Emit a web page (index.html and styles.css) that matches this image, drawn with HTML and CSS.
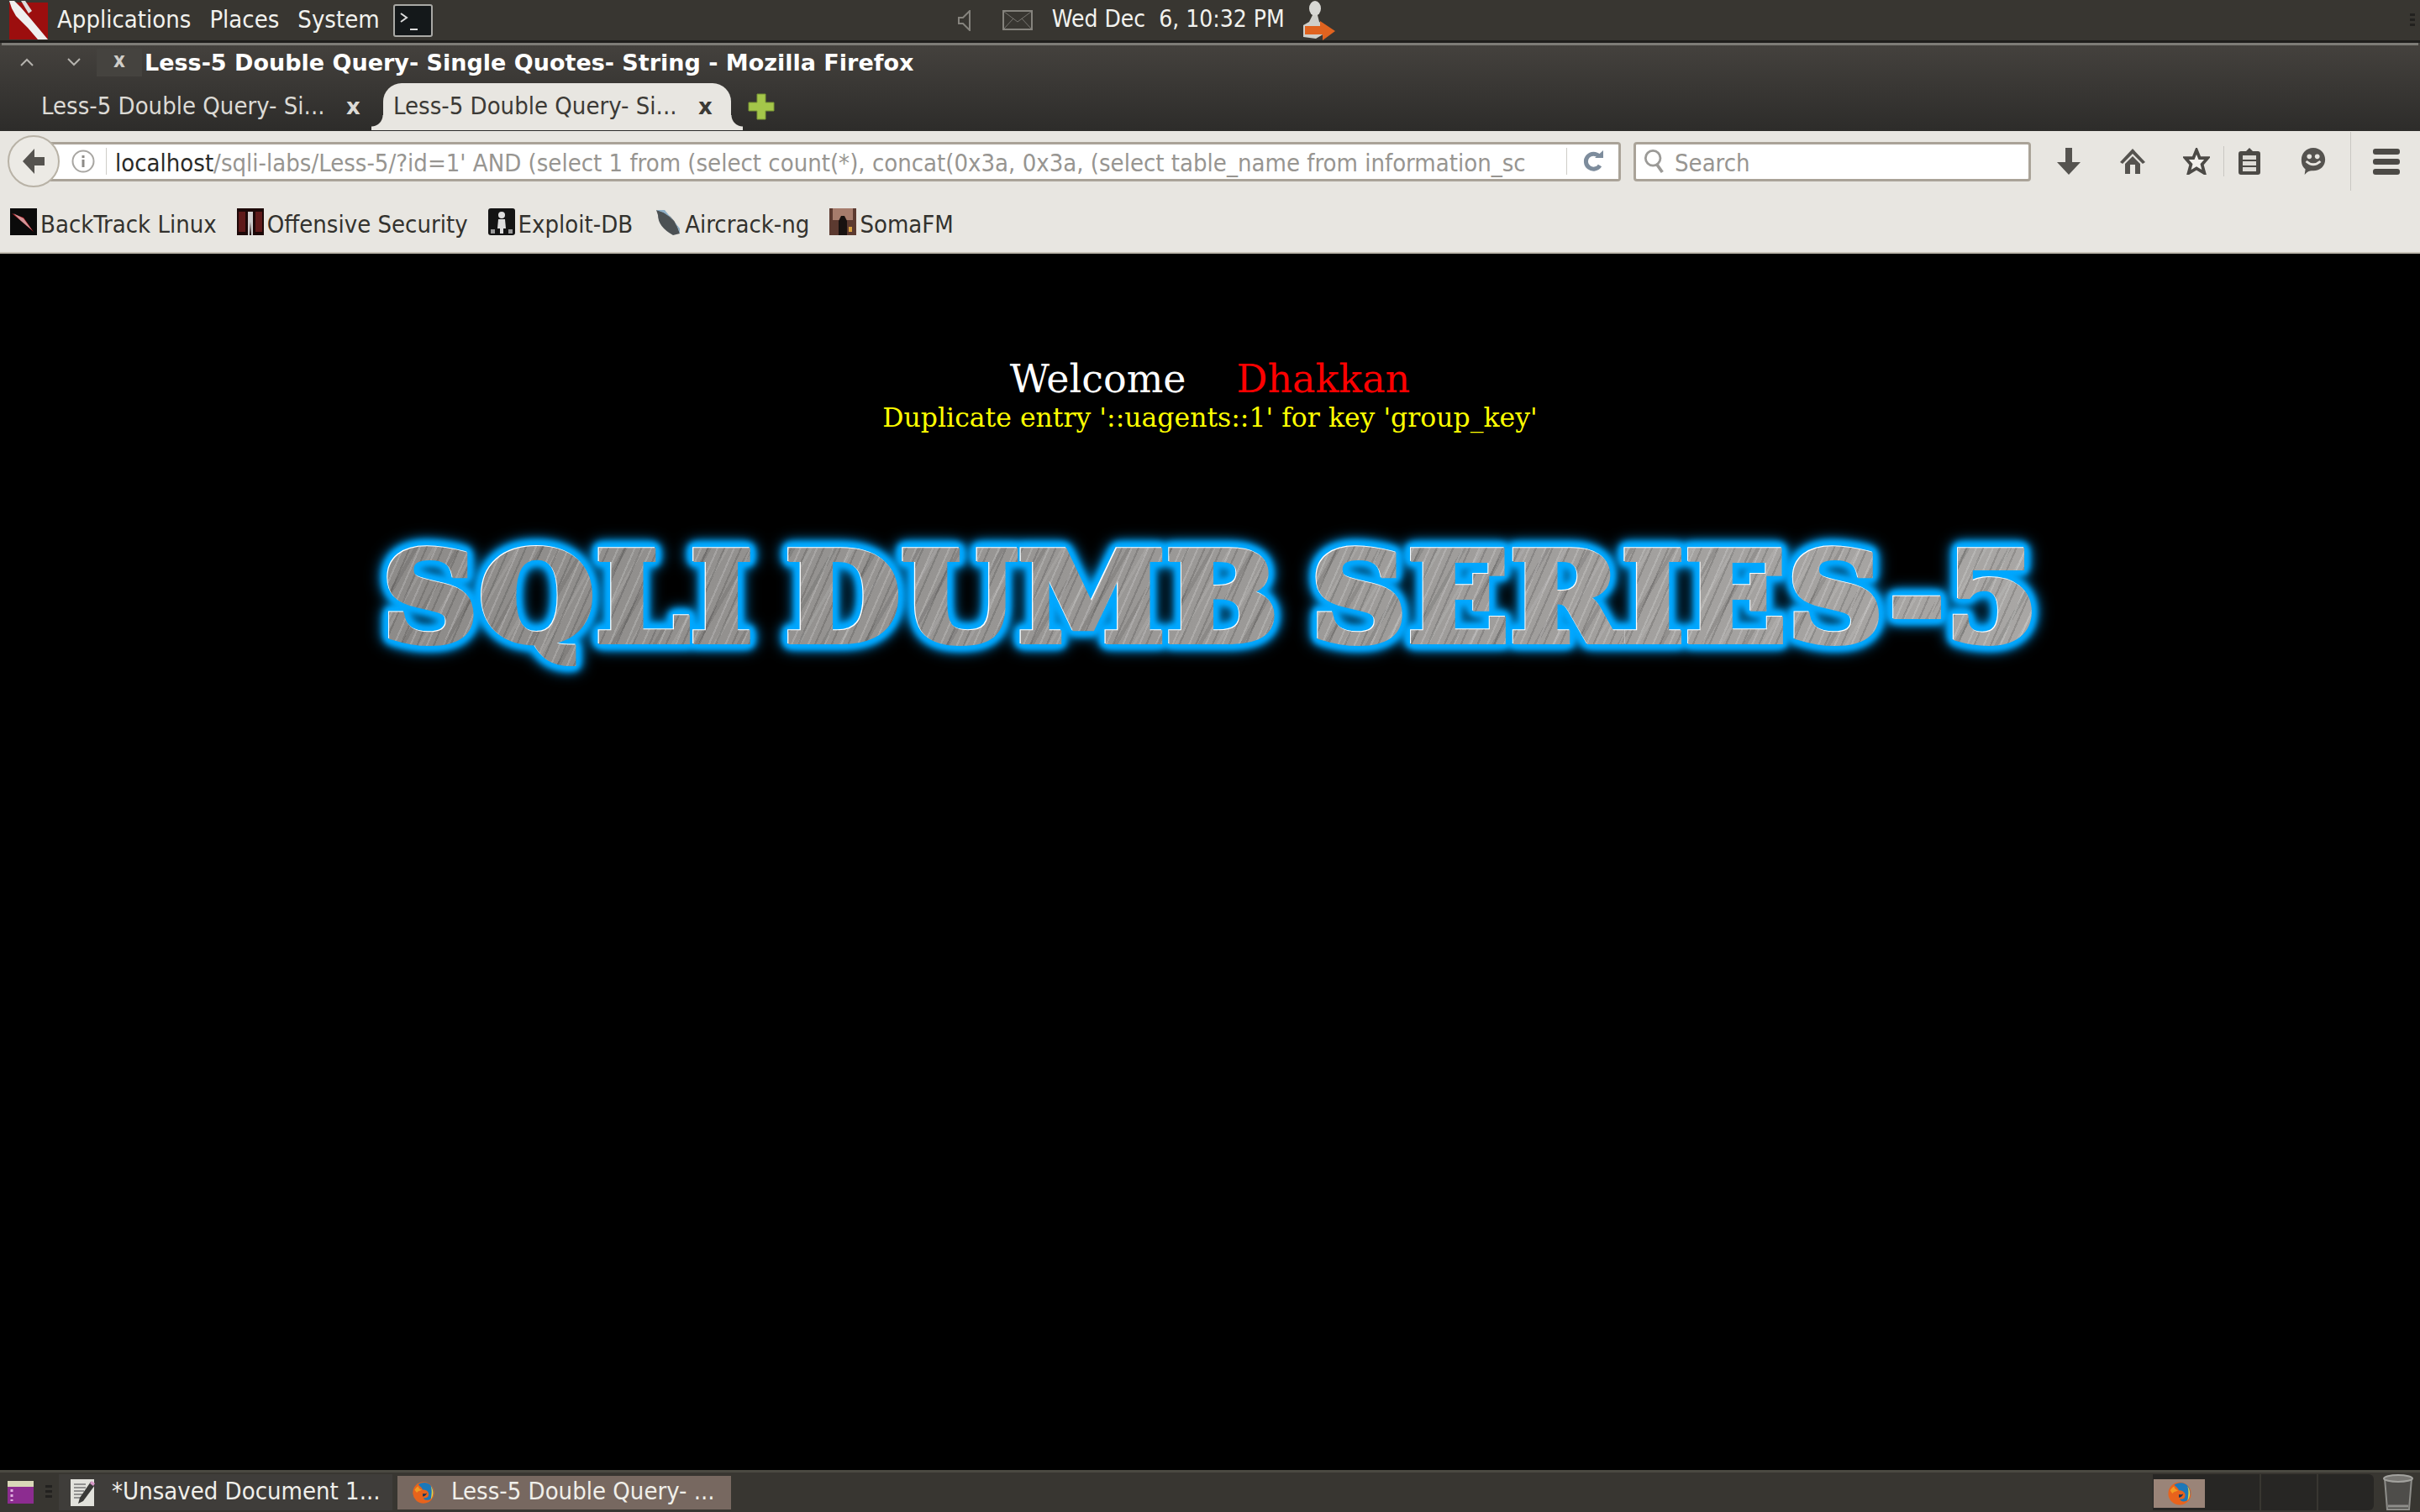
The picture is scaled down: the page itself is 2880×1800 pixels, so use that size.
FILE: index.html
```html
<!DOCTYPE html>
<html lang="en">
<head>
  <meta charset="UTF-8" />
  <title>Less-5 Double Query- Single Quotes- String - Mozilla Firefox</title>
  <link rel="stylesheet" href="styles.css">
</head>
<body>
  <svg class="defs" width="0" height="0">
    <symbol id="firefox" viewBox="0 0 32 32">
      <circle cx="16" cy="16" r="14.5" fill="#e8631c"/>
      <path d="M9 5c5-4 15-4 19 4 3 6 1 13-3 16-4 2-8 1-9-2 4 1 7-1 7-5 0-4-4-6-8-6-1-3-3-4-6-7z" fill="#1c78b8"/>
      <path d="M26 7c4 5 4 13 0 18 1-6 2-12 0-18z" fill="#f2d23c"/>
      <path d="M15 17c3 1 6 0 6-2-1 4-3 6-6 6z" fill="#12345e"/>
      <path d="M4 12c2-3 3-4 5-5 0 3 2 4 5 5-3 2-5 1-7 4-1-1-2-2-3-4z" fill="#f29a22"/>
    </symbol>
  </svg>

  <header class="panel">
    <svg class="logo" viewBox="0 0 46 46">
      <rect y="2" width="46" height="44" fill="#9c0e0e"/>
      <path d="M0 0h6l8 8 12 14 10 12 10 12H34L22 32 8 18 3 9z" fill="#efefef"/>
      <path d="M14 0h5l8 12-4 3z" fill="#ddd"/>
    </svg>
    <nav class="panel-menu">
      <span>Applications</span>
      <span>Places</span>
      <span>System</span>
    </nav>
    <svg class="term-icon" viewBox="0 0 47 39">
      <rect x="1" y="1" width="45" height="37" rx="2" fill="#14181a" stroke="#a9a9a5" stroke-width="2"/>
      <path d="M9 11l7 5-7 5M20 30h9" fill="none" stroke="#ddd" stroke-width="2"/>
    </svg>
    <div class="panel-tray">
      <svg class="speaker" viewBox="0 0 15 25">
        <path d="M1 9h5l8-8v23l-8-8H1z" fill="none" stroke="#85837d" stroke-width="2"/>
      </svg>
      <svg class="mail" viewBox="0 0 36 24">
        <rect x="1" y="1" width="34" height="22" fill="none" stroke="#85837d" stroke-width="2"/>
        <path d="M2 2l16 12L34 2M2 22l11-12M34 22L23 10" fill="none" stroke="#777570"/>
      </svg>
      <span class="clock">Wed Dec &nbsp;6, 10:32 PM</span>
      <svg class="user-icon" viewBox="0 0 42 47">
        <ellipse cx="18" cy="9" rx="7" ry="9" fill="#d8d8d4"/>
        <path d="M15 17h6l2 8 6 4v10l-10 6-15-2 0-14 7-4z" fill="#cfcfca"/>
        <path d="M6 30h18v-6l18 12-15 11v-7H6z" fill="#e0631f"/>
      </svg>
    </div>
    <div class="handle"></div>
  </header>

  <div class="browser-top">
    <div class="titlebar">
      <svg class="win-btn" viewBox="0 0 16 10"><path d="M1 9l7-7 7 7" fill="none" stroke="#b5b3ae" stroke-width="2"/></svg>
      <svg class="win-btn down" viewBox="0 0 16 10"><path d="M1 1l7 7 7-7" fill="none" stroke="#b5b3ae" stroke-width="2"/></svg>
      <span class="win-close">x</span>
      <span class="win-title">Less-5 Double Query- Single Quotes- String - Mozilla Firefox</span>
    </div>
    <div class="tabstrip">
      <div class="tab">
        <span class="tab-label">Less-5 Double Query- Si...</span>
        <span class="tab-x">x</span>
      </div>
      <div class="tab active">
        <span class="tab-label">Less-5 Double Query- Si...</span>
        <span class="tab-x">x</span>
      </div>
      <svg class="newtab" viewBox="0 0 32 32">
        <path d="M11 1h10v10h10v10H21v10H11V21H1V11h10z" fill="#a4c64a" stroke="#7d9a35" stroke-width="1"/>
      </svg>
    </div>
  </div>

  <div class="navbar">
    <div class="back">
      <svg viewBox="0 0 28 32" class="back-arrow"><path d="M15 1v10h12v10H15v10L1 16z" fill="#55534f"/></svg>
    </div>
    <div class="urlbar">
      <svg class="info" viewBox="0 0 28 28">
        <circle cx="14" cy="14" r="12.5" fill="none" stroke="#a8a6a2" stroke-width="2"/>
        <path d="M14 7v3M14 12v9" stroke="#8d8b87" stroke-width="3"/>
      </svg>
      <span class="url-sep"></span>
      <span class="url-text"><b>localhost</b>/sqli-labs/Less-5/?id=1' AND (select 1 from (select count(*), concat(0x3a, 0x3a, (select table_name from information_sc</span>
      <span class="url-sep right"></span>
      <svg class="reload" viewBox="0 0 24 28">
        <path d="M20 19a9 9 0 1 1-1-11" fill="none" stroke="#7d8c9c" stroke-width="5"/>
        <path d="M14 10h10V1z" fill="#7d8c9c"/>
      </svg>
    </div>
    <div class="searchbar">
      <svg class="magnifier" viewBox="0 0 28 32">
        <circle cx="12" cy="12" r="9.5" fill="none" stroke="#9b9a97" stroke-width="3"/>
        <path d="M17 20l7 10" stroke="#9b9a97" stroke-width="4"/>
      </svg>
      <span class="search-text">Search</span>
    </div>
    <div class="nav-icons">
      <svg class="nav-icon i-down" viewBox="0 0 32 32"><path d="M12 0h8v17h10L16 32 2 17h10z" fill="#55534f"/></svg>
      <svg class="nav-icon i-home" viewBox="0 0 32 32"><path d="M16 1l15 16-3 2L16 7 4 19l-3-2zM7 19l9-9 9 9v12h-6V20h-6v11H7z" fill="#55534f"/></svg>
      <svg class="nav-icon i-star" viewBox="0 0 32 34"><path d="M16 3l4 10h10l-7 8 3 11-10-6-10 6 3-11-7-8h10z" fill="#f2f0ec" stroke="#4c4a46" stroke-width="4"/></svg>
      <span class="nav-sep"></span>
      <svg class="nav-icon i-clip" viewBox="0 0 28 32"><path d="M10 4l4-4 4 4h6q3 0 3 3v22q0 3-3 3H4q-3 0-3-3V7q0-3 3-3z" fill="#4c4a46"/><path d="M6 9h16v5H6zM6 16h16v5H6zM6 23h16v5H6z" fill="#dedcd7"/></svg>
      <svg class="nav-icon i-smile" viewBox="0 0 32 34"><path d="M16 0c9 0 15 7 15 15s-6 14-15 14c-3 0-5 0-8 2l-3 3 1-7C2 24 1 20 1 15 1 7 7 0 16 0z" fill="#55534f"/><circle cx="11" cy="11" r="3" fill="#e8e6e1"/><circle cx="21" cy="11" r="3" fill="#e8e6e1"/><path d="M7 17q9 8 18 0" fill="none" stroke="#e8e6e1" stroke-width="3"/></svg>
      <span class="nav-sep tall"></span>
      <div class="burger"><i></i><i></i><i></i></div>
    </div>
  </div>

  <div class="bookmarks">
    <span class="bm bm-1">
      <svg viewBox="0 0 32 32"><rect width="32" height="32" fill="#0b0b0b"/><path d="M2 6l14 5 12 17-15-13z" fill="#b51c24"/><path d="M4 6l12 6 10 14-13-11z" fill="#e8e8e8" opacity=".6"/></svg>
      BackTrack Linux
    </span>
    <span class="bm bm-2">
      <svg viewBox="0 0 32 32"><rect width="32" height="32" fill="#1c0808"/><path d="M2 4h8v24H2zM22 4h8v24h-8z" fill="#5e1a1a"/><path d="M13 4h6v28h-2l-1-16-1 16h-2z" fill="#cfcfcf"/></svg>
      Offensive Security
    </span>
    <span class="bm bm-3">
      <svg viewBox="0 0 32 32"><rect width="32" height="32" rx="3" fill="#141414"/><circle cx="16" cy="8" r="4" fill="#ddd"/><path d="M12 13h8l1 11h-3v6h-4v-6h-3z" fill="#ddd"/><path d="M3 25h5v5H3zM24 25h5v5h-5z" fill="#999"/></svg>
      Exploit-DB
    </span>
    <span class="bm bm-4">
      <svg viewBox="0 0 32 32"><path d="M2 2q22 4 28 28l-8 2Q4 22 4 8z" fill="#4c5154"/><path d="M2 2l10 0 18 22v6Q24 8 2 2z" fill="#8fb0c8"/></svg>
      Aircrack-ng
    </span>
    <span class="bm bm-5">
      <svg viewBox="0 0 32 32"><rect width="32" height="32" fill="#5c3a30"/><rect x="4" width="24" height="14" fill="#a67c6c"/><path d="M11 32V15l3-6h4l3 6v17z" fill="#181210"/><rect x="23" y="22" width="4" height="6" fill="#d8a040"/></svg>
      SomaFM
    </span>
  </div>

  <main class="page">
    <p class="welcome"><span class="who">Welcome</span><span class="name">Dhakkan</span></p>
    <p class="sql-error">Duplicate entry '::uagents::1' for key 'group_key'</p>
    <h1 class="banner"><span class="banner-text" data-text="SQLI DUMB SERIES-5">SQLI DUMB SERIES-5</span></h1>
  </main>

  <footer class="taskbar">
    <svg class="show-desktop" viewBox="0 0 31 27">
      <rect width="31" height="27" fill="#8c2c90"/>
      <rect width="31" height="7" fill="#d9d8b8"/>
      <path d="M5 10v14" stroke="#e0b0e0" stroke-width="3" stroke-dasharray="3 3"/>
    </svg>
    <div class="handle small"></div>
    <div class="task">
      <svg class="task-icon" viewBox="0 0 30 32">
        <rect x="0" y="0" width="28" height="32" fill="#e2e2dc"/>
        <path d="M4 6h14M4 10h14M4 14h12M4 18h10M4 22h8" stroke="#777" stroke-width="1.5"/>
        <path d="M24 3l5 4-14 19-6 3 2-7z" fill="#3a3a38"/>
        <path d="M25 2l4 3-2 3-4-3z" fill="#d898c8"/>
      </svg>
      <span>*Unsaved Document 1...</span>
    </div>
    <div class="task current">
      <svg class="task-ff"><use href="#firefox"/></svg>
      <span>Less-5 Double Query- ...</span>
    </div>
    <div class="workspaces">
      <div class="ws on"><svg class="ws-ff"><use href="#firefox"/></svg></div>
      <div class="ws"></div>
      <div class="ws"></div>
      <div class="ws"></div>
    </div>
    <svg class="trash" viewBox="0 0 36 44">
      <path d="M2 5h32l-3 37H5z" fill="#4e4d4a" stroke="#8e8e8a" stroke-width="2"/>
      <ellipse cx="18" cy="5" rx="17" ry="4" fill="#777672" stroke="#a2a29e" stroke-width="2"/>
      <path d="M6 38h24" stroke="#8e8e8a" stroke-width="3"/>
    </svg>
  </footer>
</body>
</html>
```

FILE: styles.css
```css
* {
  box-sizing: border-box;
}
html, body {
  margin: 0;
  height: 1800px;
  overflow: hidden;
}
body {
  display: flex;
  flex-direction: column;
  background: #000;
  font-family: "DejaVu Sans", sans-serif;
  font-stretch: condensed;
}
.defs {
  position: absolute;
}

/* top gnome panel */
.panel {
  height: 48px;
  background: #383631;
  display: flex;
  align-items: center;
  color: #f2f2ee;
  font-size: 29px;
  flex: none;
}
.logo {
  width: 46px;
  height: 46px;
  margin-left: 11px;
  flex: none;
}
.panel-menu {
  display: flex;
  gap: 22px;
  margin-left: 11px;
  margin-top: -3px;
}
.term-icon {
  width: 47px;
  height: 39px;
  margin-left: 16px;
  flex: none;
}
.panel-tray {
  display: flex;
  align-items: center;
  margin-left: 625px;
}
.speaker {
  width: 15px;
  height: 25px;
}
.mail {
  width: 36px;
  height: 24px;
  margin-left: 38px;
}
.clock {
  margin-left: 23px;
  margin-top: -3px;
  width: 278px;
  font-size: 28px;
  white-space: nowrap;
}
.user-icon {
  width: 42px;
  height: 47px;
  margin-left: 17px;
}
.handle {
  width: 6px;
  height: 16px;
  margin-left: auto;
  margin-right: 6px;
  background: repeating-linear-gradient(#22211f 0 3px, transparent 3px 6px);
}
.handle.small {
  margin: 0 0 0 14px;
  width: 8px;
  height: 18px;
}

/* firefox window chrome */
.browser-top {
  height: 108px;
  flex: none;
  border-top: 3px solid #1f1e1c;
  background: linear-gradient(#45423e, #2d2c2a);
  position: relative;
}
.browser-top::before {
  content: "";
  position: absolute;
  left: 2px;
  right: 2px;
  top: 0;
  height: 3px;
  background: #7e7c77;
}
.titlebar {
  height: 46px;
  display: flex;
  align-items: center;
  color: #fff;
}
.win-btn {
  width: 16px;
  height: 10px;
  margin-left: 24px;
  flex: none;
}
.win-btn.down {
  margin-left: 40px;
}
.win-close {
  width: 54px;
  height: 33px;
  margin-left: 19px;
  background: #45433f;
  color: #cfcdc8;
  text-align: center;
  font-size: 24px;
  font-weight: bold;
  line-height: 28px;
  flex: none;
}
.win-title {
  margin-left: 3px;
  font-size: 27px;
  font-weight: bold;
  font-stretch: normal;
  white-space: nowrap;
}
.tabstrip {
  height: 56px;
  display: flex;
  align-items: flex-end;
  padding-left: 25px;
  position: relative;
  top: 2px;
}
.tab {
  width: 431px;
  height: 56px;
  display: flex;
  align-items: center;
  padding: 0 0 0 24px;
  color: #dcdad5;
  font-size: 29px;
  white-space: nowrap;
  flex: none;
}
.tab-label {
  width: 363px;
  margin-top: -2px;
}
.tab-x {
  font-weight: bold;
  font-stretch: normal;
  font-size: 26px;
}
.tab.active {
  width: 414px;
  padding-left: 12px;
  background: #e8e6e1;
  color: #3c3a36;
  border-radius: 22px 22px 0 0;
  position: relative;
}
.tab.active::before,
.tab.active::after {
  content: "";
  position: absolute;
  bottom: 0;
  width: 14px;
  height: 18px;
  background: radial-gradient(circle at 0 0, transparent 13px, #e8e6e1 14px);
}
.tab.active::before {
  left: -14px;
}
.tab.active::after {
  right: -14px;
  transform: scaleX(-1);
}
.newtab {
  width: 32px;
  height: 32px;
  margin: 0 0 12px 20px;
}

/* nav + bookmarks */
.navbar {
  height: 72px;
  flex: none;
  background: #e8e6e1;
  display: flex;
  align-items: center;
  padding-left: 9px;
  position: relative;
}
.back {
  width: 62px;
  height: 62px;
  border-radius: 50%;
  border: 2px solid #b8b2a6;
  background: #eceae5;
  display: flex;
  align-items: center;
  justify-content: center;
  position: relative;
  z-index: 1;
  flex: none;
}
.back-arrow {
  width: 28px;
  height: 32px;
}
.urlbar {
  width: 1888px;
  height: 47px;
  margin-left: -30px;
  padding-left: 44px;
  background: #fff;
  border: 3px solid #aaa398;
  border-left: 0;
  border-radius: 0 4px 4px 0;
  display: flex;
  align-items: center;
  flex: none;
  font-size: 29px;
  color: #979591;
}
.info {
  width: 28px;
  height: 28px;
  flex: none;
}
.url-sep {
  width: 1px;
  height: 32px;
  background: #cfcdc8;
  margin-left: 13px;
  flex: none;
}
.url-sep.right {
  margin-left: 49px;
}
.url-text {
  margin-left: 10px;
  width: 1678px;
  padding-top: 4px;
  white-space: nowrap;
  overflow: hidden;
}
.url-text b {
  font-weight: normal;
  color: #2a2a28;
}
.reload {
  width: 24px;
  height: 28px;
  margin-left: 19px;
  flex: none;
}
.searchbar {
  width: 473px;
  height: 47px;
  margin-left: 15px;
  background: #fff;
  border: 3px solid #aaa398;
  border-radius: 4px;
  display: flex;
  align-items: center;
  padding-left: 9px;
  flex: none;
}
.magnifier {
  width: 26px;
  height: 30px;
}
.search-text {
  margin-left: 11px;
  padding-top: 4px;
  font-size: 29px;
  color: #979591;
}
.nav-icons {
  display: flex;
  align-items: center;
  flex: none;
  position: relative;
  height: 72px;
}
.nav-icon {
  height: 32px;
  flex: none;
}
.i-down {
  width: 32px;
  margin-left: 29px;
}
.i-home {
  width: 32px;
  margin-left: 44px;
}
.i-star {
  width: 32px;
  margin-left: 44px;
}
.nav-sep {
  width: 1px;
  height: 36px;
  background: #c9c7c2;
  margin-left: 16px;
}
.i-clip {
  width: 28px;
  margin-left: 16px;
}
.i-smile {
  width: 32px;
  margin-left: 46px;
}
.nav-sep.tall {
  height: 70px;
  margin-left: 28px;
}
.burger {
  margin-left: 26px;
  width: 32px;
  display: flex;
  flex-direction: column;
  gap: 5px;
}
.burger i {
  display: block;
  height: 7px;
  border-radius: 3px;
  background: #4c4a46;
}
.bookmarks {
  height: 74px;
  flex: none;
  background: #e8e6e1;
  border-bottom: 2px solid #c4bfb4;
  display: flex;
  align-items: center;
  padding: 0 0 0 12px;
  font-size: 29px;
  color: #33322e;
}
.bm {
  display: flex;
  align-items: center;
  gap: 4px;
  white-space: nowrap;
  padding-top: 5px;
}
.bm svg {
  width: 32px;
  height: 32px;
  flex: none;
  margin-top: -5px;
}
.bm-2 {
  margin-left: 24px;
}
.bm-3 {
  margin-left: 24px;
}
.bm-4 {
  margin-left: 26px;
}
.bm-5 {
  margin-left: 24px;
}

/* sqli page */
.page {
  flex: 1;
  background: #000;
  text-align: center;
  font-family: "DejaVu Serif", serif;
  font-stretch: normal;
}
.page p {
  margin: 0;
}
.welcome {
  padding-top: 120px;
  font-size: 46px;
  line-height: 58px;
  display: flex;
  justify-content: center;
  gap: 60px;
}
.who {
  color: #fff;
}
.name {
  color: #f00;
}
.page .sql-error {
  margin-top: -3px;
  color: #ff0;
  font-size: 31.5px;
  line-height: 40px;
}
.banner {
  margin: 121px 0 0;
  line-height: 1;
  font-size: 146px;
  font-weight: bold;
  white-space: nowrap;
  letter-spacing: 2px;
  word-spacing: -18px;
}
.banner-text {
  display: inline-block;
  position: relative;
  color: #fff;
  -webkit-text-stroke: 8px #fff;
  filter: drop-shadow(0 0 2px #00a8ff) drop-shadow(0 0 2px #00a8ff) drop-shadow(0 0 3px #00a8ff) drop-shadow(0 0 3px #00a8ff) drop-shadow(0 0 3px #00a8ff) drop-shadow(0 0 7px #0090e0);
  transform: scaleX(1.075);
}
/* textured copy of the title, padded so the Q tail and stroke stay inside the clip */
.banner-text::after {
  content: attr(data-text);
  position: absolute;
  left: -19px;
  top: -19px;
  padding: 20px 20px 50px;
  color: transparent;
  -webkit-text-stroke: 8px transparent;
  background:
    repeating-linear-gradient(112deg, rgba(255,255,255,.18) 0 2px, transparent 2px 7px, rgba(0,0,0,.14) 7px 9px, transparent 9px 17px),
    repeating-linear-gradient(118deg, rgba(255,255,255,.1) 0 3px, transparent 3px 23px, rgba(0,0,0,.1) 23px 27px, transparent 27px 41px),
    linear-gradient(90deg, #8d8b89, #a9a7a5);
  -webkit-background-clip: text;
  background-clip: text;
}

/* bottom panel */
.taskbar {
  height: 50px;
  flex: none;
  background: #383631;
  border-top: 3px solid #4b4a42;
  display: flex;
  align-items: center;
  padding-left: 9px;
  color: #f0efea;
  font-size: 29px;
  white-space: nowrap;
}
.show-desktop {
  width: 31px;
  height: 27px;
  flex: none;
}
.task {
  height: 43px;
  width: 397px;
  margin-left: 8px;
  background: #3f3d3a;
  display: flex;
  align-items: center;
  padding-left: 14px;
  flex: none;
}
.task-icon {
  width: 30px;
  height: 32px;
  flex: none;
}
.task span {
  margin-left: 19px;
  margin-top: -3px;
}
.task.current {
  height: 40px;
  margin-left: 6px;
  background: #776860;
  padding-left: 17px;
}
.task-ff {
  width: 28px;
  height: 32px;
  flex: none;
}
.workspaces {
  margin-left: auto;
  width: 263px;
  height: 43px;
  padding: 0 1px;
  background: #272624;
  border-radius: 0 6px 6px 0;
  display: flex;
  gap: 2px;
  align-items: stretch;
  flex: none;
}
.ws {
  flex: 1;
  border-right: 2px solid #383631;
}
.ws:last-child {
  border: 0;
}
.ws.on {
  background: #9a8478;
  margin: 6px 0 3px;
  border: 0;
  flex: 0 0 61px;
  display: flex;
  align-items: center;
  justify-content: center;
}
.ws-ff {
  width: 30px;
  height: 30px;
}
.trash {
  width: 36px;
  height: 44px;
  margin: 0 8px 0 11px;
  flex: none;
}
```
